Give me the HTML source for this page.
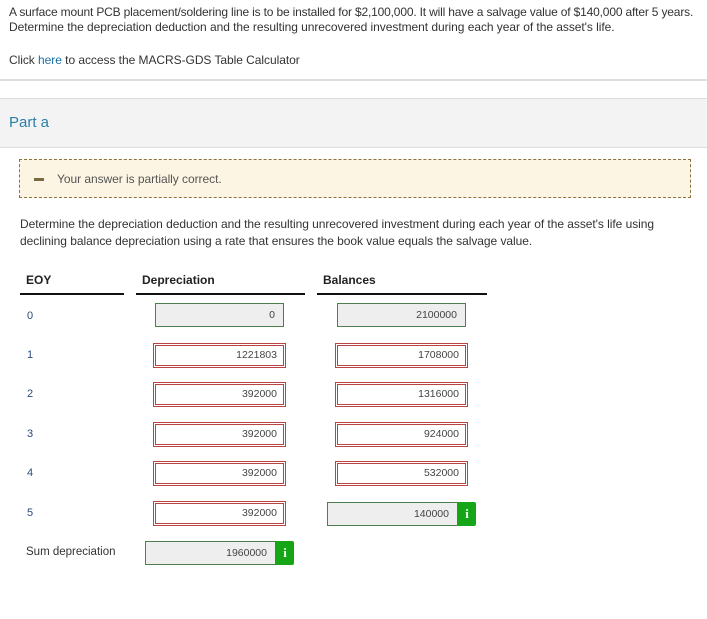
<!DOCTYPE html>
<html><head><meta charset="utf-8"><style>
body{margin:0;width:707px;height:619px;background:#fff;font-family:"Liberation Sans",sans-serif;color:#333;position:relative;overflow:hidden}
.a{position:absolute;white-space:nowrap}
.t{font-size:12px;letter-spacing:-0.05px}
.g{position:absolute;box-sizing:border-box;height:24px;background:#eee;border:1px solid #4e7d4e;font-size:10.5px;text-align:right;padding-right:8px;line-height:22px;color:#444}
.r{position:absolute;box-sizing:border-box;height:25px;background:#fff;border:1px solid #b84444;padding:1px}
.r div{box-sizing:border-box;height:21px;border:1px solid #b84444;font-size:10.5px;text-align:right;padding-right:6px;line-height:19px;color:#444}
.i{position:absolute;width:18px;height:24px;background:#16a516;color:#fff;font-weight:bold;font-family:"Liberation Serif",serif;font-size:13px;text-align:center;line-height:24px;border-radius:0 2px 2px 0}
.l{position:absolute;height:2px;background:#111;top:293px}
.n{position:absolute;left:27px;font-size:11px;color:#2b4a7a}
</style></head><body>
<div class="a t" style="left:9px;top:5px;letter-spacing:-0.17px">A surface mount PCB placement/soldering line is to be installed for $2,100,000. It will have a salvage value of $140,000 after 5 years.</div>
<div class="a t" style="left:9px;top:20px">Determine the depreciation deduction and the resulting unrecovered investment during each year of the asset's life.</div>
<div class="a t" style="left:9px;top:53px">Click <span style="color:#1a6fa8">here</span> to access the MACRS-GDS Table Calculator</div>
<div class="a" style="left:0;top:79px;width:707px;height:2px;background:#ddd"></div>
<div class="a" style="left:0;top:98px;width:707px;height:48px;background:#f3f3f3;border-top:1px solid #ddd;border-bottom:1px solid #ddd"></div>
<div class="a" style="left:9px;top:114px;font-size:15px;color:#2a7fa8">Part a</div>
<div class="a" style="left:19px;top:159px;width:672px;height:39px;background:#fcf5e3;border:1px dashed #8b7340;box-sizing:border-box"></div>
<div class="a" style="left:34px;top:178px;width:10px;height:3px;background:#7a6a40"></div>
<div class="a t" style="left:57px;top:172px;color:#555">Your answer is partially correct.</div>
<div class="a t" style="left:20px;top:217px">Determine the depreciation deduction and the resulting unrecovered investment during each year of the asset's life using</div>
<div class="a t" style="left:20px;top:234px">declining balance depreciation using a rate that ensures the book value equals the salvage value.</div>
<div class="a" style="left:26px;top:273px;font-size:12px;font-weight:bold;color:#222">EOY</div>
<div class="a" style="left:142px;top:273px;font-size:12px;font-weight:bold;color:#222">Depreciation</div>
<div class="a" style="left:323px;top:273px;font-size:12px;font-weight:bold;color:#222">Balances</div>
<div class="l" style="left:20px;width:104px"></div>
<div class="l" style="left:136px;width:169px"></div>
<div class="l" style="left:317px;width:170px"></div>
<div class="n" style="top:310px">0</div><div class="n" style="top:349px">1</div><div class="n" style="top:388px">2</div><div class="n" style="top:428px">3</div><div class="n" style="top:467px">4</div><div class="n" style="top:507px">5</div>
<div class="g" style="left:155px;top:303px;width:129px">0</div>
<div class="g" style="left:337px;top:303px;width:129px">2100000</div>
<div class="r" style="left:153px;top:343px;width:133px"><div>1221803</div></div>
<div class="r" style="left:335px;top:343px;width:133px"><div>1708000</div></div>
<div class="r" style="left:153px;top:382px;width:133px"><div>392000</div></div>
<div class="r" style="left:335px;top:382px;width:133px"><div>1316000</div></div>
<div class="r" style="left:153px;top:422px;width:133px"><div>392000</div></div>
<div class="r" style="left:335px;top:422px;width:133px"><div>924000</div></div>
<div class="r" style="left:153px;top:461px;width:133px"><div>392000</div></div>
<div class="r" style="left:335px;top:461px;width:133px"><div>532000</div></div>
<div class="r" style="left:153px;top:501px;width:133px"><div>392000</div></div>
<div class="g" style="left:327px;top:502px;width:131px">140000</div>
<div class="i" style="left:458px;top:502px">i</div>
<div class="a" style="left:26px;top:546px;font-size:11.5px;color:#333">Sum depreciation</div>
<div class="g" style="left:145px;top:541px;width:131px">1960000</div>
<div class="i" style="left:276px;top:541px">i</div>
</body></html>
